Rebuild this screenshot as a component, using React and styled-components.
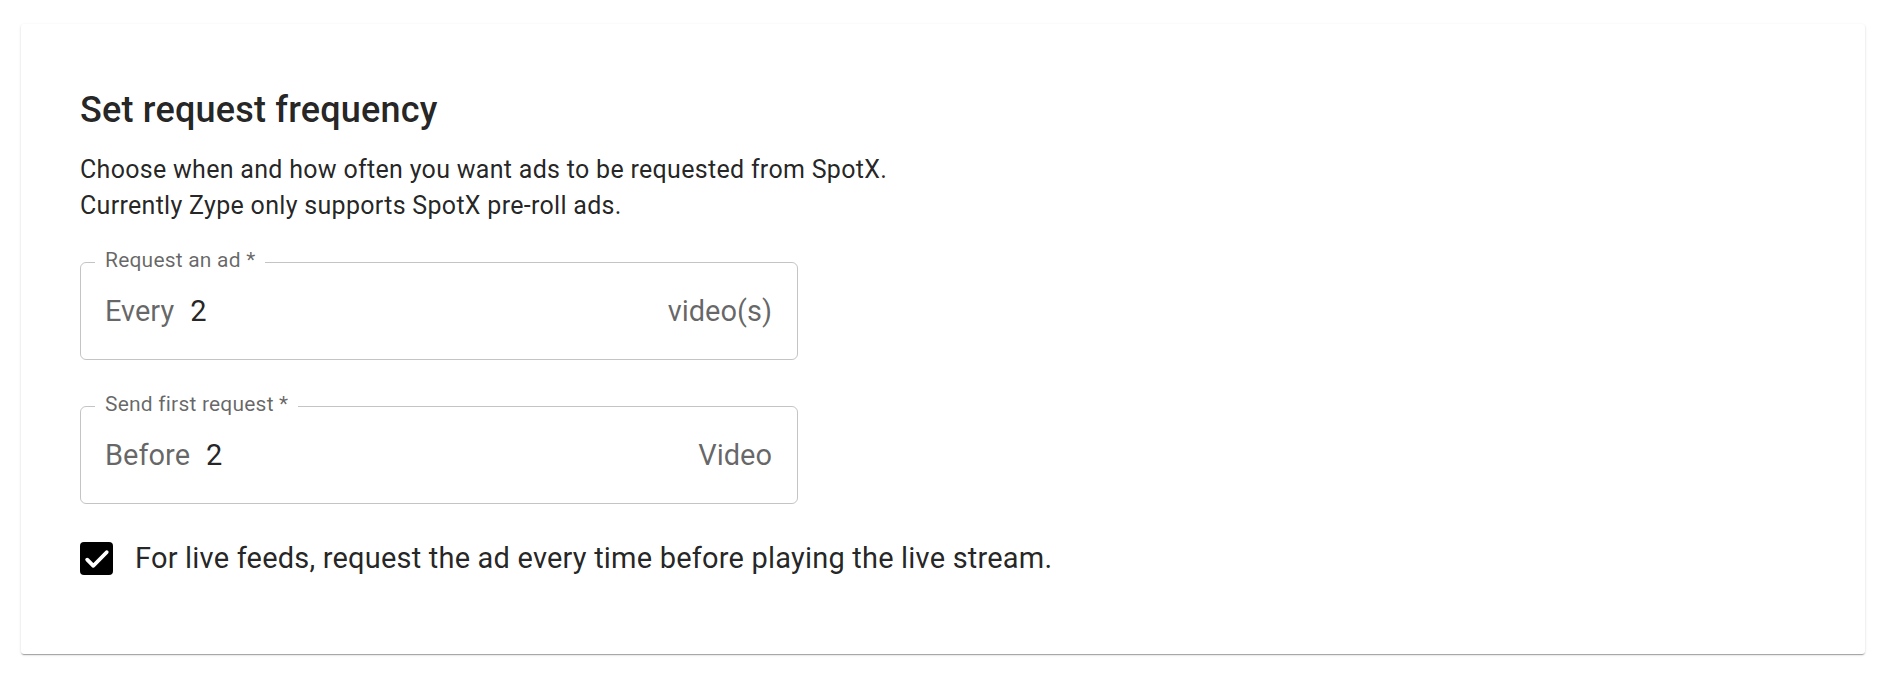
import React from "react";
import styled, { createGlobalStyle } from "styled-components";

const GlobalStyle = createGlobalStyle`
    body {
        margin: 0;
        background: #ffffff;
        font-family: Roboto, "Liberation Sans", Arial, sans-serif;
        color: rgba(0, 0, 0, 0.87);
    }
`

const Page = styled.div`
    padding: 24px 23px 20px 21px;
`

const Card = styled.section`
    background: #ffffff;
    border-radius: 3px;
    padding: 66px 59px 79px 59px;
    box-shadow: 0px 2px 1px -1px rgba(0, 0, 0, 0.2), 0px 1px 1px 0px rgba(0, 0, 0, 0.14), 0px 1px 3px 0px rgba(0, 0, 0, 0.12);
`

const Title = styled.h2`
    margin: 0 0 22px 0;
    font-size: 36px;
    line-height: 40px;
    font-weight: 500;
    letter-spacing: 0.2px;
    color: rgba(0, 0, 0, 0.87);
`

const Intro = styled.p`
    margin: 0 0 38px 0;
    font-size: 25px;
    line-height: 36px;
    letter-spacing: 0.3px;
    color: rgba(0, 0, 0, 0.87);
`

const Field = styled.div`
    position: relative;
    width: 718px;
    height: 98px;
    box-sizing: border-box;
    border: 1px solid rgba(0, 0, 0, 0.23);
    border-radius: 6px;
    padding: 0 25px 0 24px;
    display: flex;
    align-items: center;
    margin-bottom: ${props => props.last ? "38px" : "46px"};
`

const Legend = styled.label`
    position: absolute;
    top: -15px;
    left: 14px;
    padding: 0 10px;
    background: #ffffff;
    font-size: 21px;
    line-height: 24px;
    letter-spacing: 0.2px;
    color: rgba(0, 0, 0, 0.6);
`

const Prefix = styled.span`
    font-size: 29px;
    color: rgba(0, 0, 0, 0.6);
    margin-right: 16px;
`

const Value = styled.span`
    flex: 1;
    font-size: 29px;
    color: rgba(0, 0, 0, 0.87);
`

const Suffix = styled.span`
    font-size: 29px;
    color: rgba(0, 0, 0, 0.6);
`

const CheckRow = styled.label`
    display: flex;
    align-items: center;
    gap: 22px;
    font-size: 29px;
    line-height: 33px;
    letter-spacing: 0.2px;
    color: rgba(0, 0, 0, 0.87);
`

const Box = styled.span`
    width: 33px;
    height: 33px;
    border-radius: 4px;
    background: #000000;
    display: flex;
    align-items: center;
    justify-content: center;
    flex-shrink: 0;
`

const Check = () => (
    <svg width="28" height="28" viewBox="0 0 24 24">
        <path d="M3.6 12.6l5.3 5.2 11.4-11.6" fill="none" stroke="#ffffff" strokeWidth="3.3" strokeLinecap="round" strokeLinejoin="round" />
    </svg>
)

const App = () => {
    return (
        <Page>
            <GlobalStyle />
            <Card>
                <Title>Set request frequency</Title>
                <Intro>
                    Choose when and how often you want ads to be requested from SpotX.<br />
                    Currently Zype only supports SpotX pre-roll ads.
                </Intro>
                <Field>
                    <Legend>Request an ad *</Legend>
                    <Prefix>Every</Prefix>
                    <Value>2</Value>
                    <Suffix>video(s)</Suffix>
                </Field>
                <Field last>
                    <Legend>Send first request *</Legend>
                    <Prefix>Before</Prefix>
                    <Value>2</Value>
                    <Suffix>Video</Suffix>
                </Field>
                <CheckRow>
                    <Box><Check /></Box>
                    For live feeds, request the ad every time before playing the live stream.
                </CheckRow>
            </Card>
        </Page>
    )
}

export default App;
